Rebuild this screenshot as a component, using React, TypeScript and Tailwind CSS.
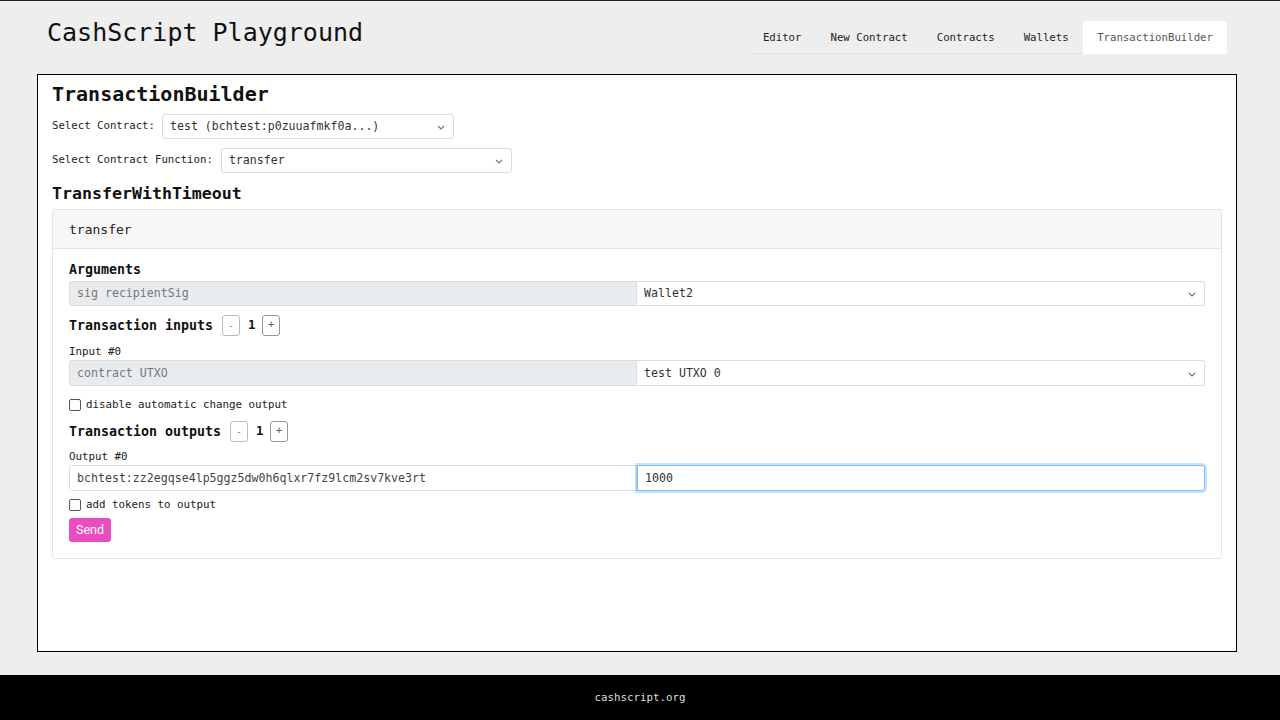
import React from "react";

const mono = { fontFamily: '"DejaVu Sans Mono", "Liberation Mono", monospace' };

function Chevron() {
  return (
    <svg width="8" height="5" viewBox="0 0 8 5" className="shrink-0">
      <path d="M1 1 L4 4 L7 1" fill="none" stroke="#777" strokeWidth="1.2" />
    </svg>
  );
}

function SelectBox({ text, className }: { text: string; className: string }) {
  return (
    <div
      className={`flex items-center justify-between bg-white border border-[#dcdcdc] rounded-[3px] pl-[7px] pr-[8px] text-[11.6px] text-[#333] ${className}`}
    >
      <span>{text}</span>
      <Chevron />
    </div>
  );
}

function Counter({ label, ml }: { label: string; ml: string }) {
  return (
    <div className="flex items-center h-[21px]">
      <span className="text-[13.3px] font-bold text-[#111]">{label}</span>
      <div className={`h-[21px] w-[18px] border border-[#bbb] rounded-[3px] flex items-center justify-center text-[10px] text-[#888] ${ml}`}>-</div>
      <span className="mx-[8px] text-[12.5px] font-bold text-[#111] w-[6px] text-center">1</span>
      <div className="h-[21px] w-[18px] border border-[#999] rounded-[3px] flex items-center justify-center text-[11px] text-[#666]">+</div>
    </div>
  );
}

function Check({ label, className }: { label: string; className: string }) {
  return (
    <div className={`flex items-center h-[14px] ${className}`}>
      <div className="w-[12px] h-[12px] border border-[#555] rounded-[2px] bg-white" />
      <span className="ml-[5px] text-[10.8px] text-[#222]">{label}</span>
    </div>
  );
}

export default function App() {
  const tabs = ["Editor", "New Contract", "Contracts", "Wallets"];
  return (
    <div className="min-h-screen bg-[#eeeeee] flex flex-col border-t border-[#222]" style={mono}>
      <header className="h-[73px] flex justify-between">
        <div className="pl-[47px] pt-[15px] text-[25px] leading-[34px] text-[#111]">CashScript Playground</div>
        <nav className="flex pt-[20px] pr-[53px]">
          <div className="flex h-[33px] border-b border-[#e3e3e3]">
            {tabs.map((t) => (
              <div key={t} className="px-[14.5px] h-[32px] flex items-center pt-[2px] text-[10.7px] text-[#222]">
                {t}
              </div>
            ))}
          </div>
          <div className="px-[14px] h-[33px] bg-white rounded-t-[3px] flex items-center pt-[2px] text-[10.7px] text-[#555]">
            TransactionBuilder
          </div>
        </nav>
      </header>

      <main className="ml-[37px] w-[1200px] h-[578px] border border-black bg-[#fffffe] px-[14px] pt-[7px]">
        <h1 className="text-[20px] leading-[24px] font-bold text-[#111]">TransactionBuilder</h1>
        <div className="flex items-center mt-[8px]">
          <span className="text-[10.7px] text-[#222]">Select Contract:</span>
          <SelectBox text="test (bchtest:p0zuuafmkf0a...)" className="ml-[7px] w-[292px] h-[25px] pt-[1px]" />
        </div>
        <div className="flex items-center mt-[9px]">
          <span className="text-[10.7px] text-[#222]">Select Contract Function:</span>
          <SelectBox text="transfer" className="ml-[8px] w-[291px] h-[25px] pt-[1px]" />
        </div>
        <h2 className="text-[16.6px] leading-[20px] font-bold text-[#111] mt-[10px] pt-[1px]">TransferWithTimeout</h2>

        <div className="mt-[5px] border border-[#e4e4e4] rounded-[3px] bg-white">
          <div className="h-[39px] bg-[#f7f7f7] border-b border-[#e4e4e4] flex items-center pl-[16px] pt-[1px] text-[13px] text-[#222]">
            transfer
          </div>
          <div className="px-[16px] pt-[12px] pb-[16px]">
            <div className="text-[13.3px] leading-[16px] font-bold text-[#111] pt-[1px]">Arguments</div>
            <div className="flex mt-[3px] h-[25px]">
              <div className="w-1/2 bg-[#e9ecef] border border-[#dcdcdc] rounded-l-[3px] flex items-center pl-[7px] pt-[1px] text-[11.6px] text-[#777]">
                sig recipientSig
              </div>
              <SelectBox text="Wallet2" className="w-1/2 h-[25px] rounded-l-none border-l-0 pt-[1px]" />
            </div>

            <div className="mt-[9px]">
              <Counter label="Transaction inputs" ml="ml-[9px]" />
            </div>
            <div className="mt-[8px] text-[10.8px] leading-[14px] text-[#222] pt-[1px]">Input #0</div>
            <div className="flex mt-[1px] h-[26px]">
              <div className="w-1/2 bg-[#e9ecef] border border-[#dcdcdc] rounded-l-[3px] flex items-center pl-[7px] pt-[2px] text-[11.6px] text-[#777]">
                contract UTXO
              </div>
              <SelectBox text="test UTXO 0" className="w-1/2 h-[26px] rounded-l-none border-l-0 pt-[2px]" />
            </div>
            <Check label="disable automatic change output" className="mt-[12px]" />

            <div className="mt-[9px]">
              <Counter label="Transaction outputs" ml="ml-[9px]" />
            </div>
            <div className="mt-[7px] text-[10.8px] leading-[14px] text-[#222] pt-[1px]">Output #0</div>
            <div className="flex mt-[1px] h-[26px]">
              <div className="w-1/2 bg-white border border-[#dcdcdc] rounded-l-[3px] flex items-center pl-[7px] pt-[1px] text-[11.6px] text-[#444]">
                bchtest:zz2egqse4lp5ggz5dw0h6qlxr7fz9lcm2sv7kve3rt
              </div>
              <div className="w-1/2 bg-white border border-[#80bdff] rounded-r-[3px] shadow-[0_0_0_2px_rgba(0,123,255,0.22)] flex items-center pl-[7px] pt-[1px] text-[11.6px] text-[#333]">
                1000
              </div>
            </div>
            <Check label="add tokens to output" className="mt-[7px]" />
            <button
              className="mt-[6px] h-[24px] w-[42px] bg-[#ea4dbf] rounded-[3px] text-white text-[12.5px] flex items-center justify-center"
              style={{ fontFamily: 'Roboto, "Noto Sans", sans-serif' }}
            >
              Send
            </button>
          </div>
        </div>
      </main>

      <div className="h-[23px]" />
      <footer className="h-[45px] bg-black flex items-center justify-center pt-[1px] text-[10.8px] text-[#ddd]">
        cashscript.org
      </footer>
    </div>
  );
}
